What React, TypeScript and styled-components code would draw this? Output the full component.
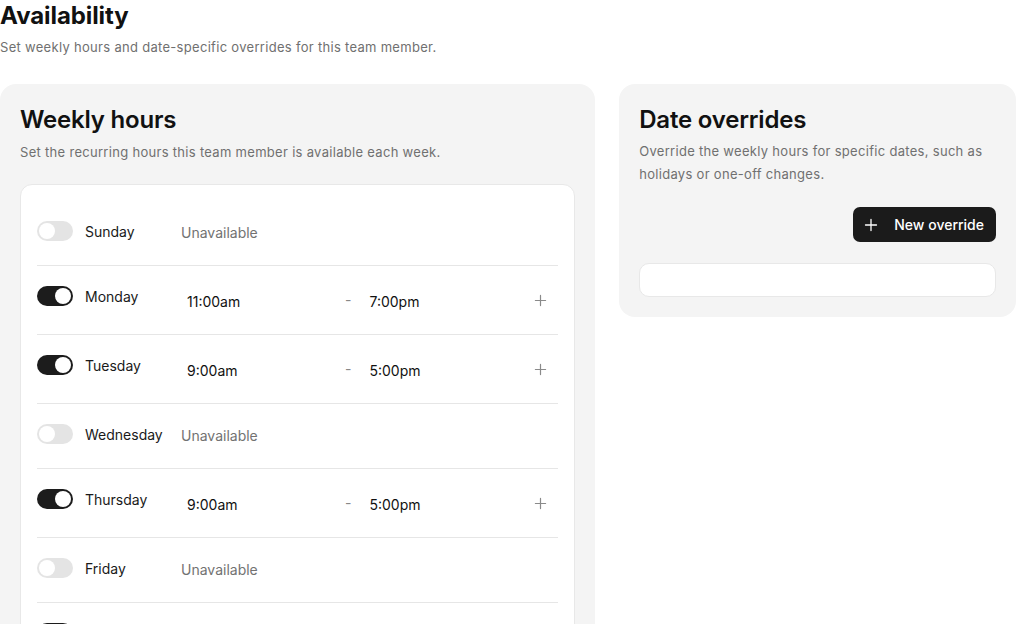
import { useState } from "react";
import styled, { createGlobalStyle } from "styled-components";

const GlobalStyle = createGlobalStyle`
  * { box-sizing: border-box; }
  body {
    margin: 0;
    background: #ffffff;
    font-family: Inter, "Noto Sans", sans-serif;
    color: #111111;
  }
`;

const Page = styled.main`
  width: 1016px;
`;

const Header = styled.header`
  display: flex;
  flex-direction: column;
  gap: 5px;
  margin-bottom: 27px;
`;

const PageTitle = styled.h1`
  margin: 0;
  font-size: 24px;
  line-height: 32px;
  font-weight: 700;
  letter-spacing: -0.1px;
`;

const Muted = styled.p`
  margin: 0;
  font-size: 13px;
  line-height: 20px;
  letter-spacing: 0.3px;
  color: #707070;
`;

const Columns = styled.div`
  display: grid;
  grid-template-columns: 3fr 2fr;
  gap: 24px;
  align-items: start;
`;

const Card = styled.section`
  background: #f4f4f4;
  border-radius: 16px;
  padding: 21px 20px 20px;
  display: flex;
  flex-direction: column;
`;

const CardTitle = styled.h2`
  margin: 0;
  font-size: 24px;
  line-height: 30px;
  font-weight: 600;
  letter-spacing: -0.2px;
`;

const CardText = styled(Muted)<{ $lh?: number }>`
  margin-top: ${(p) => (p.$lh ? 5 : 7)}px;
  line-height: ${(p) => p.$lh ?? 20}px;
`;

const Inner = styled.div`
  margin-top: 22px;
  background: #ffffff;
  border: 1px solid #e8e8e8;
  border-radius: 12px;
  padding: 0 16px;
`;

const Row = styled.div`
  display: flex;
  align-items: flex-start;
  padding: 16px 0;
  border-bottom: 1px solid #e6e6e6;
  &:first-child {
    margin-top: 16px;
  }
`;

const DayCell = styled.div`
  display: flex;
  align-items: center;
  gap: 12px;
  height: 28px;
  width: 144px;
  flex-shrink: 0;
`;

const Switch = styled.button<{ $on: boolean }>`
  position: relative;
  width: 36px;
  height: 20px;
  padding: 0;
  border: none;
  border-radius: 10px;
  background: ${(p) => (p.$on ? "#1c1c1c" : "#e4e4e4")};
  cursor: pointer;
  &::after {
    content: "";
    position: absolute;
    top: 2px;
    left: ${(p) => (p.$on ? "18px" : "2px")};
    width: 16px;
    height: 16px;
    border-radius: 50%;
    background: #ffffff;
  }
`;

const DayName = styled.span`
  font-size: 14px;
  color: #1a1a1a;
`;

const Unavailable = styled.span`
  font-size: 14px;
  line-height: 32px;
  color: #727272;
`;

const Times = styled.div`
  display: flex;
  align-items: center;
  flex: 1;
  height: 36px;
`;

const TimeField = styled.span`
  width: 152px;
  padding: 3px 6px 0;
  font-size: 14px;
  line-height: 33px;
  color: #111111;
`;

const Dash = styled.span`
  margin: -2px 12px 0;
  font-size: 14px;
  color: #888888;
`;

const IconButton = styled.button`
  margin-left: auto;
  margin-right: 2px;
  width: 32px;
  height: 32px;
  display: flex;
  align-items: center;
  justify-content: center;
  background: none;
  border: none;
  padding: 0;
  color: #8a8a8a;
  cursor: pointer;
`;

const Actions = styled.div`
  display: flex;
  justify-content: flex-end;
  margin-top: 21px;
`;

const PrimaryButton = styled.button`
  display: flex;
  align-items: center;
  gap: 16px;
  height: 35px;
  padding: 0 12px 0 11px;
  border: none;
  border-radius: 7px;
  background: #1b1b1b;
  color: #ffffff;
  font-family: inherit;
  font-size: 14px;
  font-weight: 500;
  cursor: pointer;
`;

const EmptyList = styled.div`
  margin-top: 21px;
  height: 34px;
  background: #ffffff;
  border: 1px solid #e8e8e8;
  border-radius: 10px;
`;

const Plus = ({ size = 14 }: { size?: number }) => (
  <svg width={size} height={size} viewBox="0 0 14 14" fill="none" stroke="currentColor" strokeWidth="1.3" strokeLinecap="round">
    <path d="M7 1.5v11M1.5 7h11" />
  </svg>
);

type Day = { name: string; on: boolean; from?: string; to?: string };

const initialDays: Day[] = [
  { name: "Sunday", on: false },
  { name: "Monday", on: true, from: "11:00am", to: "7:00pm" },
  { name: "Tuesday", on: true, from: "9:00am", to: "5:00pm" },
  { name: "Wednesday", on: false },
  { name: "Thursday", on: true, from: "9:00am", to: "5:00pm" },
  { name: "Friday", on: false },
  { name: "Saturday", on: true, from: "10:00am", to: "2:00pm" },
];

export default function App() {
  const [days, setDays] = useState(initialDays);

  const toggle = (i: number) =>
    setDays(days.map((d, j) => (j === i ? { ...d, on: !d.on, from: d.from ?? "9:00am", to: d.to ?? "5:00pm" } : d)));

  return (
    <Page>
      <GlobalStyle />
      <Header>
        <PageTitle>Availability</PageTitle>
        <Muted>Set weekly hours and date-specific overrides for this team member.</Muted>
      </Header>
      <Columns>
        <Card>
          <CardTitle>Weekly hours</CardTitle>
          <CardText>Set the recurring hours this team member is available each week.</CardText>
          <Inner>
            {days.map((d, i) => (
              <Row key={d.name}>
                <DayCell>
                  <Switch $on={d.on} onClick={() => toggle(i)} aria-label={d.name} />
                  <DayName>{d.name}</DayName>
                </DayCell>
                {d.on ? (
                  <Times>
                    <TimeField>{d.from}</TimeField>
                    <Dash>-</Dash>
                    <TimeField>{d.to}</TimeField>
                    <IconButton aria-label="Add range">
                      <Plus size={13} />
                    </IconButton>
                  </Times>
                ) : (
                  <Unavailable>Unavailable</Unavailable>
                )}
              </Row>
            ))}
          </Inner>
        </Card>
        <Card>
          <CardTitle>Date overrides</CardTitle>
          <CardText $lh={23}>
            Override the weekly hours for specific dates, such as holidays or one-off changes.
          </CardText>
          <Actions>
            <PrimaryButton>
              <Plus />
              New override
            </PrimaryButton>
          </Actions>
          <EmptyList />
        </Card>
      </Columns>
    </Page>
  );
}
